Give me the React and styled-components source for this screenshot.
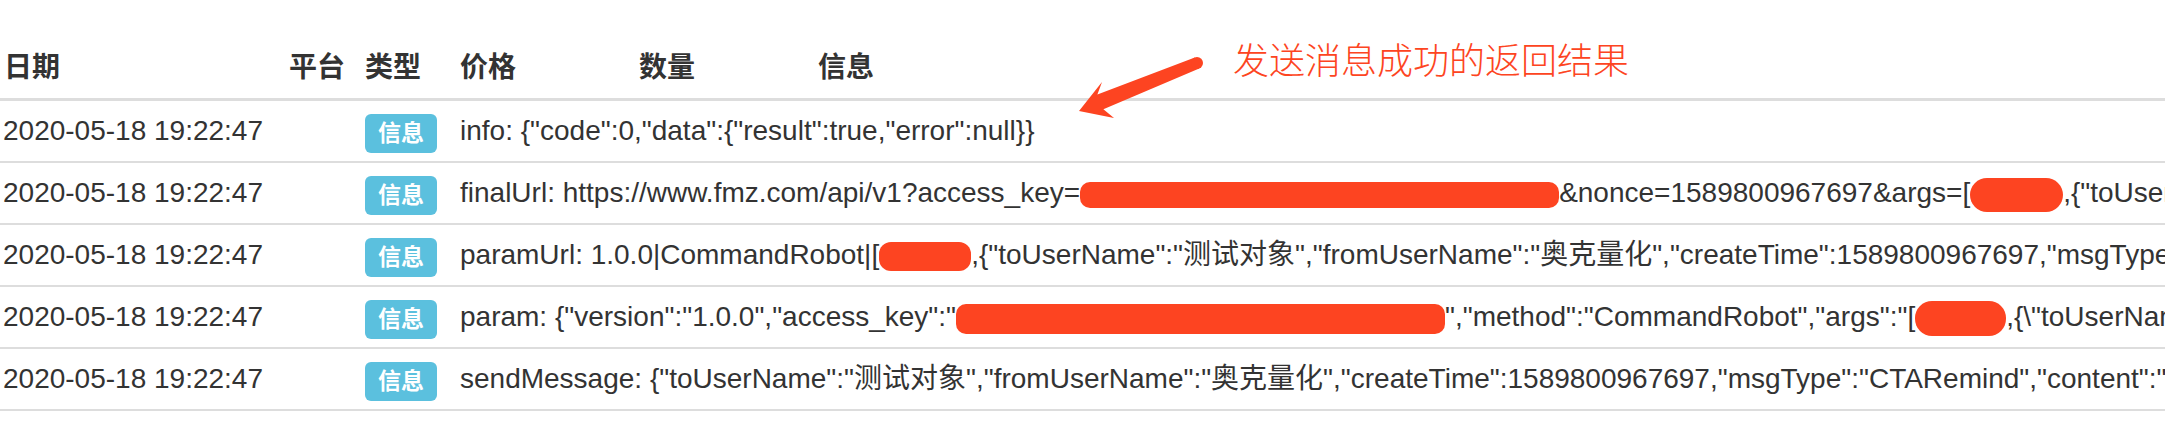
import styled, { createGlobalStyle } from 'styled-components'

const GlobalStyle = createGlobalStyle`
  html, body {
    margin: 0;
    padding: 0;
    background: #fff;
  }
  body {
    width: 2170px;
    height: 422px;
    overflow: hidden;
    font-family: "Liberation Sans", Arial, "Noto Sans CJK SC", sans-serif;
    color: #333;
  }
`

const columns = [279, 76, 95, 179, 179, null]

const rows = [
  { date: '2020-05-18 19:22:47', msg: ['info: {"code":0,"data":{"result":true,"error":null}}'] },
  {
    date: '2020-05-18 19:22:47',
    msg: [
      'finalUrl: https://www.fmz.com/api/v1?access_key=',
      { w: 479, h: 26, r: 10 },
      '&nonce=1589800967697&args=[',
      { w: 93, h: 34, r: 17 },
      ',{"toUserName":"测试对象","fromUserName":"奥克量化"}]',
    ],
  },
  {
    date: '2020-05-18 19:22:47',
    msg: [
      'paramUrl: 1.0.0|CommandRobot|[',
      { w: 92, h: 29, r: 12 },
      ',{"toUserName":"测试对象","fromUserName":"奥克量化","createTime":1589800967697,"msgType":"CTARemind","content":""}]',
    ],
  },
  {
    date: '2020-05-18 19:22:47',
    msg: [
      'param: {"version":"1.0.0","access_key":"',
      { w: 489, h: 30, r: 10 },
      '","method":"CommandRobot","args":"[',
      { w: 91, h: 35, r: 17 },
      ',{\\"toUserName\\":\\"测试对象\\"}]"}',
    ],
  },
  {
    date: '2020-05-18 19:22:47',
    msg: [
      'sendMessage: {"toUserName":"测试对象","fromUserName":"奥克量化","createTime":1589800967697,"msgType":"CTARemind","content":""}',
    ],
  },
]

const App = () => {
  return (
    <Page>
      <GlobalStyle />
      <TableWrap>
        <Table>
          <colgroup>
            {columns.map((w, i) => (
              <Col key={i} $w={w} />
            ))}
          </colgroup>
          <thead>
            <tr>
              <Th $first>日期</Th>
              <Th>平台</Th>
              <Th>类型</Th>
              <Th>价格</Th>
              <Th>数量</Th>
              <Th>信息</Th>
            </tr>
          </thead>
          <tbody>
            {rows.map((row, i) => (
              <tr key={i}>
                <Td $first>{row.date}</Td>
                <Td />
                <Td>
                  <Label>信息</Label>
                </Td>
                <Td colSpan={3}>
                  {row.msg.map((part, j) =>
                    typeof part === 'string' ? (
                      <span key={j}>{part}</span>
                    ) : (
                      <Redact key={j} $w={part.w} $h={part.h} $r={part.r} />
                    )
                  )}
                </Td>
              </tr>
            ))}
          </tbody>
        </Table>
      </TableWrap>

      <Note>发送消息成功的返回结果</Note>
      <Arrow viewBox="0 0 2170 422">
        <polygon points="1079,111 1102,82 1097.4,94.4 1194.8,57.4 1199.2,68.6 1103.4,109.2 1114,118" />
        <circle cx="1197" cy="63" r="6" />
      </Arrow>
    </Page>
  )
}

export default App

const Page = styled.div`
  position: relative;
  width: 2170px;
  height: 422px;
  padding-top: 38px;
  box-sizing: border-box;
`

const TableWrap = styled.div`
  width: 2165px;
  overflow: hidden;
`

const Table = styled.table`
  width: 2165px;
  table-layout: fixed;
  border-collapse: collapse;
  border-spacing: 0;
  font-size: 28px;
  line-height: 40px;
  border-bottom: 2px solid #ddd;
`

const Col = styled.col`
  ${(p) => (p.$w ? `width: ${p.$w}px;` : '')}
`

const Th = styled.th`
  text-align: left;
  font-weight: bold;
  color: #333;
  padding: 10px 10px 10px ${(p) => (p.$first ? '4px' : '10px')};
  border-bottom: 3px solid #ddd;
  white-space: nowrap;
`

const Td = styled.td`
  height: 40px;
  padding: 10px 10px 10px ${(p) => (p.$first ? '3px' : '10px')};
  border-bottom: 2px solid #ddd;
  white-space: nowrap;
  overflow: hidden;
  vertical-align: top;
`

const Label = styled.span`
  display: inline-block;
  box-sizing: border-box;
  height: 39px;
  margin: 3px 0 -2px;
  padding: 6px 13px 0;
  font-size: 23px;
  line-height: 27px;
  font-weight: bold;
  color: #fff;
  background: #5bc0de;
  border-radius: 6px;
  vertical-align: top;
`

const Redact = styled.span`
  display: inline-block;
  width: ${(p) => p.$w}px;
  height: ${(p) => p.$h}px;
  border-radius: ${(p) => p.$r}px;
  background: #fd4421;
  vertical-align: middle;
`

const Note = styled.div`
  position: absolute;
  left: 1233px;
  top: 40px;
  font-family: "Noto Sans CJK SC", sans-serif;
  font-size: 36px;
  line-height: 36px;
  font-weight: 300;
  color: #fd4421;
  white-space: nowrap;
`

const Arrow = styled.svg`
  position: absolute;
  left: 0;
  top: 0;
  width: 2170px;
  height: 422px;
  fill: #fd4421;
  pointer-events: none;
`
